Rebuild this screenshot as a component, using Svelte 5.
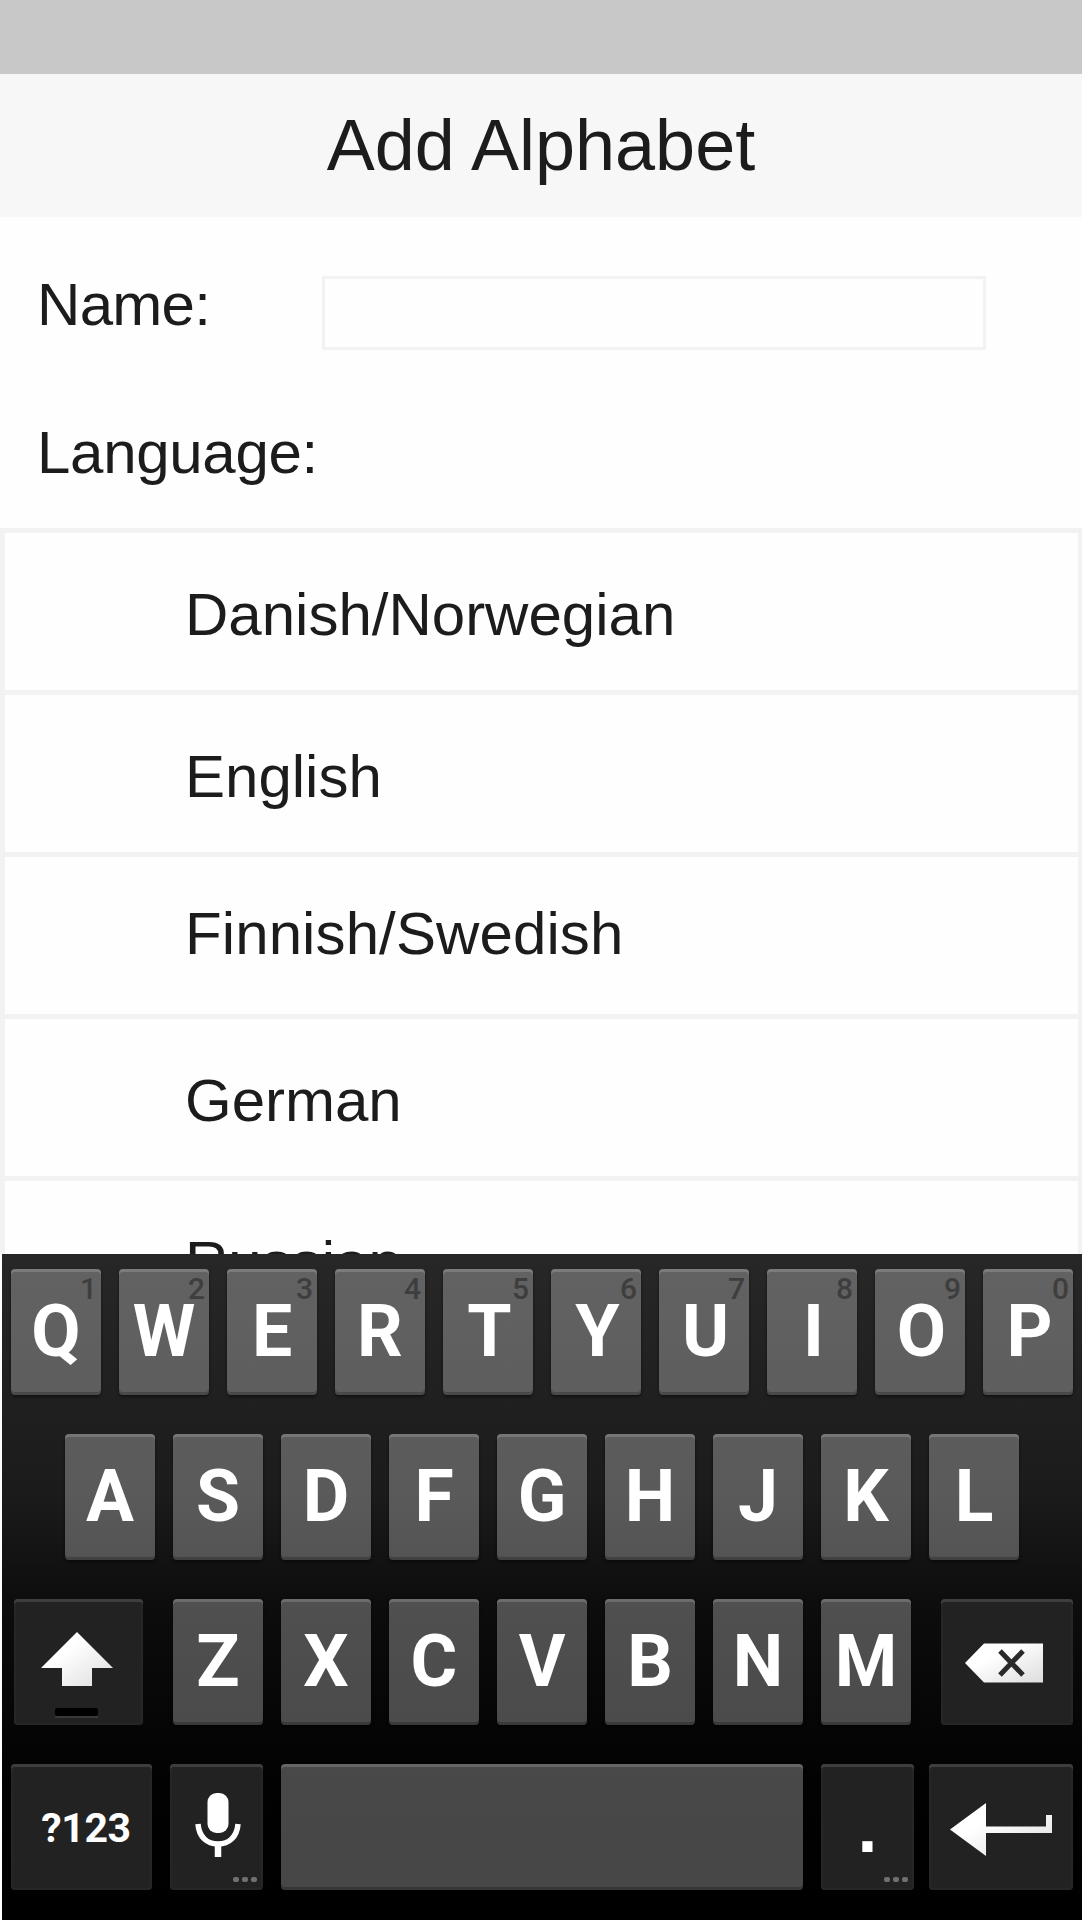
<script>
  const languages = [
    { name: 'Danish/Norwegian' },
    { name: 'English' },
    { name: 'Finnish/Swedish', raised: true },
    { name: 'German' },
    { name: 'Russian' }
  ];
  const top = [...'QWERTYUIOP'];
  const home = [...'ASDFGHJKL'];
  const bottom = [...'ZXCVBNM'];
</script>

<div class="screen">
  <div class="status"></div>
  <header><h1>Add Alphabet</h1></header>

  <div class="name-row">
    <label for="name">Name:</label>
    <input id="name" type="text" />
  </div>
  <div class="language-label">Language:</div>

  <ul class="languages">
    {#each languages as lang}
      <li class:raised={lang.raised}>{lang.name}</li>
    {/each}
  </ul>

  <div class="keyboard">
    <div class="row top">
      {#each top as letter, i}
        <div class="key">{letter}<span class="hint">{(i + 1) % 10}</span></div>
      {/each}
    </div>
    <div class="row home">
      {#each home as letter}
        <div class="key">{letter}</div>
      {/each}
    </div>
    <div class="row third">
      <div class="key dark shift">
        <svg width="129" height="126" viewBox="0 0 129 126">
          <defs>
            <linearGradient id="shine" x1="0" y1="0" x2="1" y2="1">
              <stop offset="0.35" stop-color="#fff" />
              <stop offset="1" stop-color="#ddd" />
            </linearGradient>
          </defs>
          <path d="M63 33L99 69H78V87H48V69H27Z" fill="url(#shine)" />
          <rect x="41" y="117" width="43" height="2" fill="#383838" />
          <rect x="41" y="109" width="43" height="8" rx="2" fill="#000" />
        </svg>
      </div>
      <div class="letters">
        {#each bottom as letter}
          <div class="key">{letter}</div>
        {/each}
      </div>
      <div class="key dark backspace">
        <svg width="132" height="126" viewBox="0 0 132 126">
          <path d="M24 64L43 44.5H102V83.5H43Z" fill="url(#shine)" />
          <path d="M59 52L82 76M82 52L59 76" stroke="#2a2a2a" stroke-width="5" />
        </svg>
      </div>
    </div>
    <div class="row fourth">
      <div class="key dark symbols">?123</div>
      <div class="key dark small mic">
        <svg width="93" height="126" viewBox="0 0 93 126">
          <rect x="37.5" y="29" width="21" height="40" rx="9" fill="#fff" />
          <path d="M28 60C29 73 37 80 48 80S67 73 68 60" fill="none" stroke="#fff" stroke-width="5.5" />
          <path d="M48 80V93" stroke="#fff" stroke-width="6.5" />
        </svg>
        <span class="more"><i></i><i></i><i></i></span>
      </div>
      <div class="key space"></div>
      <div class="key dark small dot">.<span class="more"><i></i><i></i><i></i></span></div>
      <div class="key dark enter">
        <svg width="144" height="126" viewBox="0 0 144 126">
          <path d="M21 65.5L57 39V62.5H117V51H123V69H57V92Z" fill="url(#shine)" />
        </svg>
      </div>
    </div>
  </div>
</div>

<style>
  :global(body) {
    background: #fff;
  }
  .screen {
    width: 1082px;
    height: 1920px;
    overflow: hidden;
    display: flex;
    flex-direction: column;
    background: #fefefe;
    color: #1c1c1c;
    font-family: 'Liberation Sans', Arial, sans-serif;
    font-size: 60px;
  }
  .screen * {
    box-sizing: border-box;
  }
  .status {
    height: 74px;
    flex: none;
    background: #c8c8c8;
  }
  header {
    height: 143px;
    flex: none;
    background: #f7f7f7;
    text-align: center;
  }
  h1 {
    margin: 0;
    font-weight: 400;
    font-size: 72px;
    line-height: 143px;
  }
  .name-row {
    height: 174px;
    flex: none;
    display: flex;
    padding-left: 37px;
  }
  label {
    width: 285px;
    line-height: 176px;
    letter-spacing: -0.7px;
  }
  input {
    width: 664px;
    height: 74px;
    margin: 59px 0 0;
    padding: 0 12px;
    border: 3px solid #f2f2f2;
    border-radius: 0;
    background: #fefefe;
    outline: none;
    font: inherit;
  }
  .language-label {
    height: 137px;
    flex: none;
    padding-left: 37px;
    line-height: 124px;
    letter-spacing: -0.3px;
  }
  .languages {
    height: 726px;
    flex: none;
    overflow: hidden;
    margin: 0;
    padding: 0;
    list-style: none;
    border: solid #f2f2f2;
    border-width: 0 4px 0 5px;
  }
  li {
    height: 162px;
    padding: 4px 0 0 180px;
    border-top: 5px solid #f2f2f2;
    line-height: 156px;
  }
  li.raised {
    padding-top: 0;
    line-height: 153px;
    letter-spacing: 0.1px;
  }
  .keyboard {
    height: 666px;
    flex: none;
    display: flex;
    flex-direction: column;
    gap: 39px;
    margin-left: 2px;
    padding: 15px 9px 30px;
    background: linear-gradient(#272727, #1b1b1b 36%, #0d0d0d 52%, #020202 80%, #000);
    color: #fff;
    font: 700 71.5px/126px Roboto, sans-serif;
  }
  .row,
  .letters {
    display: flex;
    gap: 18px;
  }
  .home {
    padding-left: 54px;
  }
  .third {
    gap: 30px;
    padding-left: 3px;
  }
  .key {
    position: relative;
    width: 90px;
    height: 126px;
    flex: none;
    border-radius: 4px;
    background: rgba(255, 255, 255, 0.278);
    box-shadow:
      inset 0 3px rgba(255, 255, 255, 0.16),
      inset 0 -3px rgba(0, 0, 0, 0.22),
      0 2px 3px rgba(0, 0, 0, 0.5);
    text-align: center;
  }
  .top .key:nth-child(n + 5) {
    padding-left: 3px;
  }
  .key svg {
    display: block;
  }
  .dark {
    background: #222;
    box-shadow:
      inset 0 3px #3e3e3e,
      inset 0 0 0 2px #262626;
  }
  .hint {
    position: absolute;
    top: 4px;
    right: 4px;
    font-size: 30px;
    font-weight: 500;
    line-height: 32px;
    color: #3e3e3e;
  }
  .shift {
    width: 129px;
  }
  .backspace {
    width: 132px;
  }
  .symbols {
    width: 141px;
    padding-left: 9px;
    font-size: 41px;
    line-height: 128px;
    letter-spacing: -0.4px;
  }
  .small {
    width: 93px;
  }
  .space {
    width: 522px;
  }
  .dot {
    font-family: 'Liberation Sans', Arial, sans-serif;
  }
  .enter {
    width: 144px;
  }
  .dot + .enter {
    margin-left: -3px;
  }
  .more {
    position: absolute;
    right: 6px;
    bottom: 8px;
    display: flex;
    gap: 3px;
  }
  .more i {
    width: 6px;
    height: 5px;
    border-radius: 2px;
    background: #707070;
  }
</style>
